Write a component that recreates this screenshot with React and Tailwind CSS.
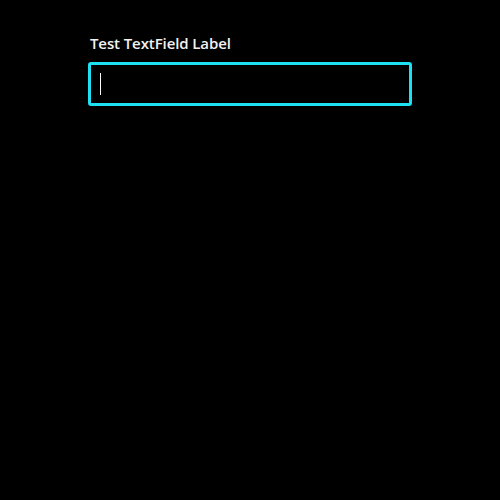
import React from 'react';

export default function App() {
    return (
        <div className="min-h-[500px] w-full bg-black" style={{ fontFamily: '"Open Sans", sans-serif' }}>
            <div className="mx-auto w-[324px] pt-[34px]">
                <label className="block px-[2px] text-[15px] leading-[19px] tracking-[-0.1px] font-semibold text-[#f2f2f2]">
                    Test TextField Label
                </label>
                <div className="mt-[9px] flex h-[44px] items-center rounded-[3px] border-[3px] border-[#1ee0f2] bg-black px-[9px]">
                    <span className="block h-[22px] w-px bg-white" />
                </div>
            </div>
        </div>
    );
}
